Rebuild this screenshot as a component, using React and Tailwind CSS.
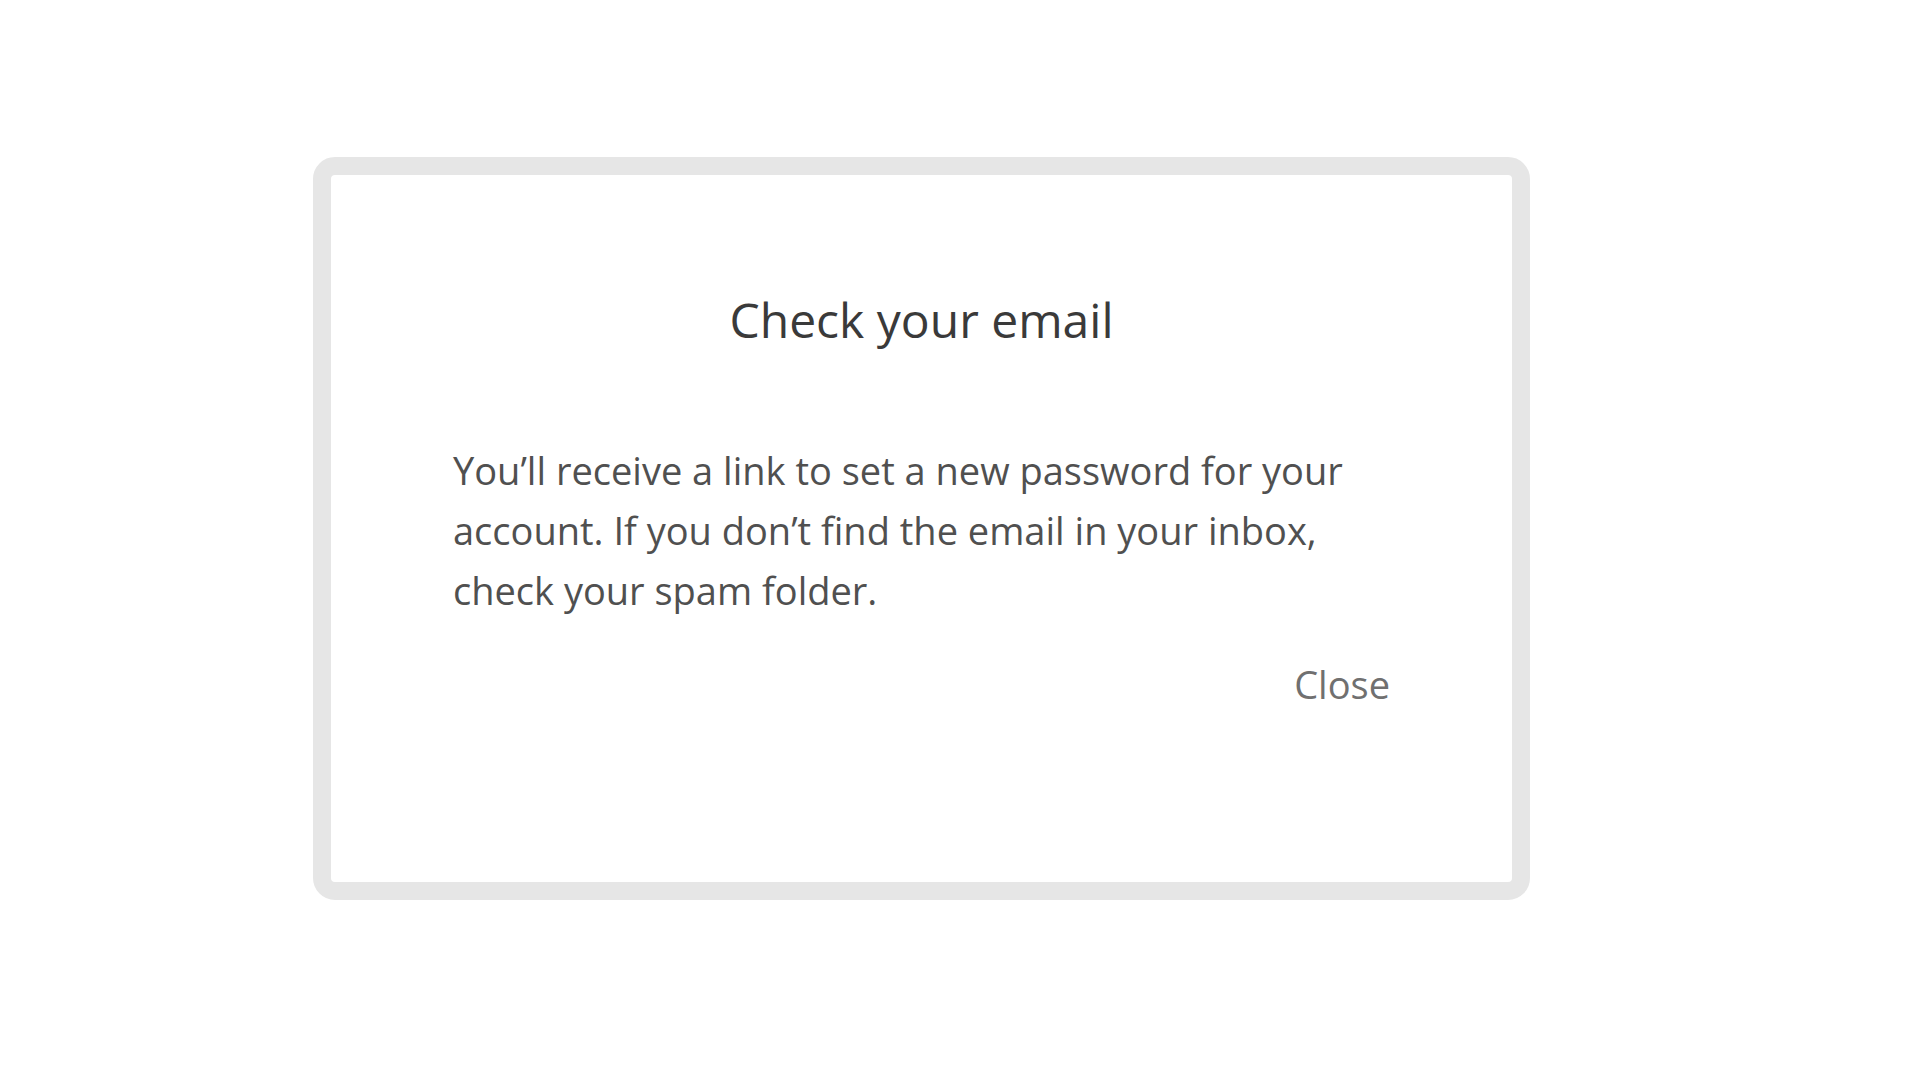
export default function App() {
  return (
    <div className="min-h-screen bg-white pt-[157px] pl-[313px] font-['Open_Sans',sans-serif]">
      <div className="w-[1217px] h-[743px] rounded-[22px] border-[18px] border-[#e6e6e6] bg-white">
        <div className="px-[122px] pt-[115px]">
          <h1 className="text-center text-[48px] leading-[60px] text-[#3a3a3a]">
            Check your email
          </h1>
          <p className="mt-[90px] text-[38px] leading-[60px] text-[#505050]">
            You’ll receive a link to set a new password for your account. If you don’t find the email in your inbox, check your spam folder.
          </p>
          <div className="mt-[34px] flex justify-end">
            <button className="text-[38px] leading-[60px] text-[#707070]">
              Close
            </button>
          </div>
        </div>
      </div>
    </div>
  );
}
